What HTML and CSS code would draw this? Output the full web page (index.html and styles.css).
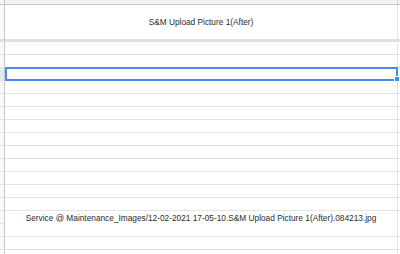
FILE: index.html
```html
<!DOCTYPE html>
<html lang="en">
<head>
    <meta charset="UTF-8">
    <title>Sheet</title>
    <link rel="stylesheet" href="styles.css">
</head>
<body>
    <div class="sheet">
        <div class="row col-head">
            <div class="rh"></div>
            <div class="cell"></div>
            <div class="next"></div>
        </div>

        <div class="row frozen">
            <div class="rh"></div>
            <div class="cell">S&amp;M Upload Picture 1(After)</div>
            <div class="next"></div>
        </div>

        <div class="row"><div class="rh"></div><div class="cell"></div><div class="next"></div></div>
        <div class="row"><div class="rh"></div><div class="cell"></div><div class="next"></div></div>
        <div class="row selected"><div class="rh"></div><div class="cell"></div><div class="next"></div></div>
        <div class="row"><div class="rh"></div><div class="cell"></div><div class="next"></div></div>
        <div class="row"><div class="rh"></div><div class="cell"></div><div class="next"></div></div>
        <div class="row"><div class="rh"></div><div class="cell"></div><div class="next"></div></div>
        <div class="row"><div class="rh"></div><div class="cell"></div><div class="next"></div></div>
        <div class="row"><div class="rh"></div><div class="cell"></div><div class="next"></div></div>
        <div class="row"><div class="rh"></div><div class="cell"></div><div class="next"></div></div>
        <div class="row"><div class="rh"></div><div class="cell"></div><div class="next"></div></div>
        <div class="row"><div class="rh"></div><div class="cell"></div><div class="next"></div></div>
        <div class="row"><div class="rh"></div><div class="cell"></div><div class="next"></div></div>
        <div class="row"><div class="rh"></div><div class="cell"></div><div class="next"></div></div>

        <div class="row merged">
            <div class="rh-stack">
                <div class="rh"></div>
                <div class="rh"></div>
            </div>
            <div class="cell">Service @ Maintenance_Images/12-02-2021 17-05-10.S&amp;M Upload Picture 1(After).084213.jpg</div>
            <div class="next"></div>
        </div>

        <div class="row"><div class="rh"></div><div class="cell"></div><div class="next"></div></div>
        <div class="row"><div class="rh"></div><div class="cell"></div><div class="next"></div></div>
    </div>
</body>
</html>
```

FILE: styles.css
```css
body {
    margin: 0;
    padding: 0;
    background-color: white;
    font-family: 'Liberation Sans', Arial, sans-serif;
    color: #2b2b2b;
    overflow: hidden;
}

.sheet {
    width: 400px;
    height: 254px;
    display: flex;
    flex-direction: column;
    overflow: hidden;
}

.row {
    display: flex;
    height: 13px;
    flex-shrink: 0;
}

.rh {
    width: 4px;
    background-color: #f8f9fa;
    border-right: 1px solid #c4c7c5;
    border-bottom: 1px solid #e2e3e3;
}

.cell {
    flex: 1;
    border-right: 1px solid #e2e3e3;
    border-bottom: 1px solid #e2e3e3;
    font-size: 8.3px;
    text-align: center;
    position: relative;
}

.next {
    width: 2px;
    border-bottom: 1px solid #e2e3e3;
}

.col-head {
    height: 5px;
}

.col-head .rh,
.col-head .cell,
.col-head .next {
    background-color: #f1f3f4;
    border-bottom: 1px solid #c4c7c5;
}

.col-head .cell {
    border-right-color: #d4d6d8;
}

.frozen {
    height: 37px;
}

.frozen .rh,
.frozen .cell,
.frozen .next {
    border-bottom: 3px solid #dde1e7;
}

.frozen .cell {
    display: flex;
    align-items: center;
    justify-content: center;
}

.selected .rh {
    background-color: #e6e8eb;
}

.selected .cell::after {
    content: "";
    position: absolute;
    top: -1px;
    left: 0;
    right: -1px;
    bottom: -1px;
    border: 2px solid #4a89f3;
}

.selected .cell::before {
    content: "";
    position: absolute;
    right: -3px;
    bottom: -2px;
    width: 4px;
    height: 4px;
    background-color: #4a89f3;
    border: 1px solid white;
    z-index: 1;
}

.merged {
    height: 26px;
}

.rh-stack {
    display: flex;
    flex-direction: column;
}

.rh-stack .rh {
    height: 12px;
}

.merged .cell {
    padding-top: 2px;
}
```
